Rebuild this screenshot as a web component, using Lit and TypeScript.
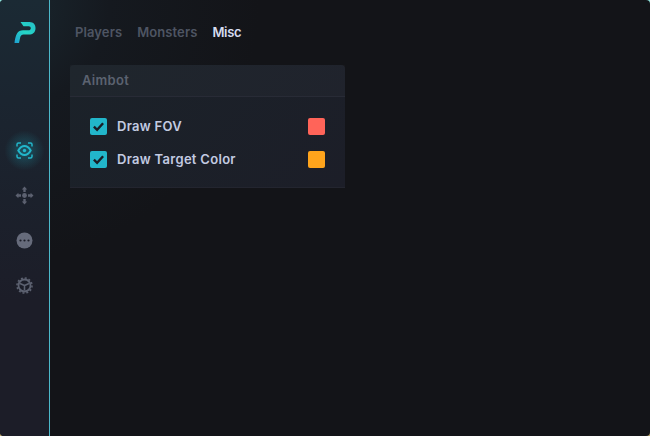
import { LitElement, css, html, svg } from 'lit';
import { customElement, property } from 'lit/decorators.js';

@customElement('color-row')
export class ColorRow extends LitElement {
  @property() label = '';
  @property() color = '#fff';

  static styles = css`
    :host {
      display: flex;
      align-items: center;
      height: 17px;
    }
    .check {
      width: 17px;
      height: 17px;
      border-radius: 2px;
      background: #22b6ca;
      display: flex;
      align-items: center;
      justify-content: center;
      margin-right: 10px;
    }
    .label {
      flex: 1;
      padding-bottom: 2px;
      font-size: 13px;
      font-weight: 600;
      color: #c3cbe2;
      letter-spacing: 0.3px;
    }
    .swatch {
      width: 17px;
      height: 17px;
      border-radius: 2px;
    }
  `;

  render() {
    return html`
      <div class="check">
        <svg width="13" height="13" viewBox="0 0 13 13">
          <path d="M1.9 6.6l3.2 3.2 6-6.6" fill="none" stroke="#1a1d26" stroke-width="2.4" />
        </svg>
      </div>
      <div class="label">${this.label}</div>
      <div class="swatch" style="background:${this.color}"></div>
    `;
  }
}

const logo = svg`
  <defs>
    <linearGradient id="lg" x1="0" y1="1" x2="1" y2="0">
      <stop offset="0" stop-color="#1f9fd0" />
      <stop offset="0.5" stop-color="#25d6c6" />
      <stop offset="1" stop-color="#25bfc8" />
    </linearGradient>
  </defs>
  <path d="M6.5 0H15.5C19.5 0 21.5 2.8 21.5 6.2C21.5 10.5 18.5 12.6 15 12.6H9.5C7.8 12.6 6.8 13.6 6.3 15L5 21H0.5C0.8 17.5 1.6 14 3 11.5C4.2 9.3 6.5 8.3 9 8.3H14.5C15.9 8.3 16.8 7.4 16.8 6.2C16.8 5 16 4.2 14.7 4.2H9.5Z" fill="url(#lg)" />
`;

@customElement('app-root')
export class AppRoot extends LitElement {
  static styles = css`
    :host {
      display: block;
      width: 650px;
      height: 436px;
      background: linear-gradient(180deg, #8fe3dc 0, #8fe3dc 50%, #b9a46a 50%);
      font-family: 'Inter', 'Liberation Sans', sans-serif;
    }
    .window {
      display: flex;
      height: 100%;
      border-radius: 4px;
      overflow: hidden;
      background:
        radial-gradient(circle at 0 0, #1a2830 0, #15191f 110px, #131418 260px);
    }
    .side {
      width: 49px;
      flex: none;
      border-right: 1px solid #4cb8ca;
      background: linear-gradient(180deg, #1b2a34 0, #1b2530 100px, #1c1d28 300px);
      display: flex;
      flex-direction: column;
      align-items: center;
    }
    .logo {
      margin-top: 22px;
      height: 21px;
      margin-bottom: 85px;
    }
    .nav {
      width: 49px;
      height: 45px;
      display: flex;
      align-items: center;
      justify-content: center;
    }
    .nav.on {
      background: radial-gradient(circle at 50% 50%, rgba(31, 181, 201, 0.34) 0, rgba(31, 181, 201, 0) 20px);
    }
    .main {
      flex: 1;
      padding: 0 20px;
    }
    .tabs {
      display: flex;
      gap: 15px;
      height: 65px;
      padding: 24px 0 0 5px;
      box-sizing: border-box;
      font-size: 13px;
      font-weight: 600;
      letter-spacing: 0.1px;
      color: #4e5563;
    }
    .tabs .on {
      color: #d6dcf0;
      letter-spacing: -0.3px;
    }
    .panel {
      width: 275px;
      border-radius: 4px 4px 0 0;
      background: linear-gradient(135deg, #1b2229 0, #1c1e28 100%);
      border-bottom: 1px solid #23252f;
    }
    .head {
      height: 32px;
      padding: 0 0 1px 12px;
      box-sizing: border-box;
      display: flex;
      align-items: center;
      border-bottom: 1px solid #282b36;
      background: rgba(255, 255, 255, 0.02);
      font-size: 13px;
      font-weight: 600;
      letter-spacing: 0.3px;
      color: #5b6270;
    }
    .rows {
      display: flex;
      flex-direction: column;
      gap: 16px;
      padding: 21px 20px 19px;
    }
  `;

  render() {
    return html`
      <div class="window">
        <div class="side">
          <svg class="logo" width="22" height="21" viewBox="0 0 22 21">${logo}</svg>
          <div class="nav on">
            <svg width="17" height="17" viewBox="0 0 17 17" fill="none" stroke="#22b6ca">
              <path d="M1 4.5V2.5C1 1.7 1.7 1 2.5 1H5M12 1H14.5C15.3 1 16 1.7 16 2.5V4.5M16 12.5V14.5C16 15.3 15.3 16 14.5 16H12M5 16H2.5C1.7 16 1 15.3 1 14.5V12.5" stroke-width="1.5" />
              <path d="M2.3 8.5C4 5.5 6 4 8.5 4S13 5.5 14.7 8.5C13 11.5 11 13 8.5 13S4 11.5 2.3 8.5Z" stroke-width="2" />
              <circle cx="8.5" cy="8.5" r="1.7" fill="#22b6ca" stroke="none" />
            </svg>
          </div>
          <div class="nav">
            <svg width="19" height="19" viewBox="0 0 19 19" fill="#5c6170">
              <circle cx="9.5" cy="9.5" r="2.4" />
              <path d="M9.5 0.5L12.2 3.4H10.7V6H8.3V3.4H6.8ZM9.5 18.5L6.8 15.6H8.3V13H10.7V15.6H12.2ZM0.5 9.5L3.4 6.8V8.3H6V10.7H3.4V12.2ZM18.5 9.5L15.6 12.2V10.7H13V8.3H15.6V6.8Z" />
            </svg>
          </div>
          <div class="nav">
            <svg width="17" height="17" viewBox="0 0 17 17">
              <circle cx="8.5" cy="8.5" r="8" fill="#666b7b" />
              <circle cx="4.5" cy="8.5" r="1.1" fill="#1c1e29" />
              <circle cx="8.5" cy="8.5" r="1.1" fill="#1c1e29" />
              <circle cx="12.5" cy="8.5" r="1.1" fill="#1c1e29" />
            </svg>
          </div>
          <div class="nav">
            <svg width="17" height="17" viewBox="0 0 17 17" fill="none" stroke="#5c6170">
              <circle cx="8.5" cy="8.5" r="6" stroke-width="1.8" />
              <circle cx="8.5" cy="8.5" r="7.5" stroke-width="1.6" stroke-dasharray="2 1.93" />
              <path d="M8.5 8.5L4 6.5M8.5 8.5L13 6.5M8.5 8.5V13.5" stroke-width="1.6" />
            </svg>
          </div>
        </div>
        <div class="main">
          <div class="tabs">
            <span>Players</span>
            <span>Monsters</span>
            <span class="on">Misc</span>
          </div>
          <div class="panel">
            <div class="head">Aimbot</div>
            <div class="rows">
              <color-row label="Draw FOV" color="#ff6459"></color-row>
              <color-row label="Draw Target Color" color="#ffa41c"></color-row>
            </div>
          </div>
        </div>
      </div>
    `;
  }
}
